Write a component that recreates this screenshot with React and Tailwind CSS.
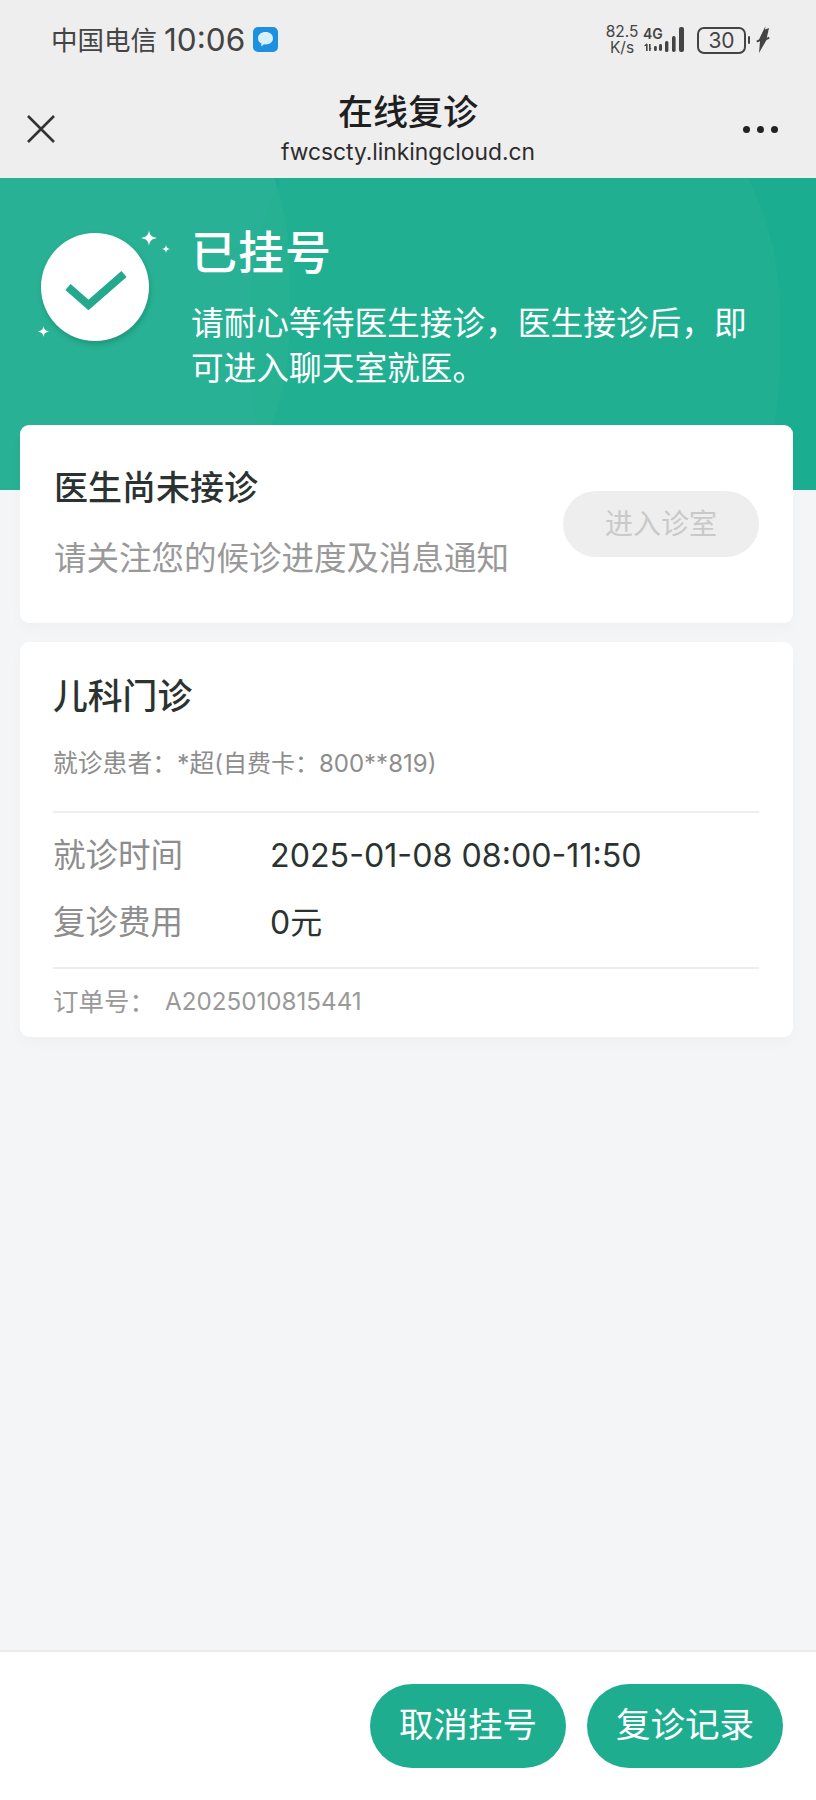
const cjk = { fontFamily: 'Inter, "Noto Sans CJK SC", sans-serif' };

function StatusIcons() {
  return (
    <div className="flex items-center text-[#444]">
      <div className="w-[36px] flex flex-col items-center text-[15.500px] leading-[16px]">
        <span>82.5</span>
        <span>K/s</span>
      </div>
      <div className="relative ml-[3px] w-[45px] h-[28px]">
        <span className="absolute left-0 top-0 text-[14px] font-semibold leading-[15px]">4G</span>
        <svg className="absolute left-0 top-0" width="45" height="28" viewBox="0 0 45 28" fill="#444">
          <path d="M3 18h1.600v7H3zM1 20l2.800-3v3zM6 18h1.600v7H6zM6 25v-3l2.600 0z" />
          <rect x="11" y="20" width="2.800" height="5" rx="1.300" />
          <rect x="16" y="18" width="3" height="7" rx="1.400" />
          <rect x="22" y="15" width="3.400" height="11" rx="1.600" />
          <rect x="29" y="10" width="3.600" height="16" rx="1.700" />
          <rect x="36" y="1" width="5" height="25" rx="2" />
        </svg>
      </div>
      <div className="flex items-center justify-center ml-[9px] w-[49px] h-[27px] rounded-[7px] border-[2px] border-[#444] text-[21px] leading-none">
        30
      </div>
      <div className="ml-[2px] w-[2px] h-[8px] bg-[#444] rounded-full" />
      <svg className="ml-[6px]" width="14" height="28" viewBox="0 0 14 28" fill="#444">
        <path d="M9.500 0 3 13.500l-2.500 1 .5 2 3-1.200L3 27l7.500-13 3-1.300-.5-1.900-2.200.9L13 2 9 3.500z" />
      </svg>
    </div>
  );
}

function TopBar() {
  return (
    <div className="bg-[#eeeeee] h-[178px] shrink-0">
      <div className="flex items-center justify-between h-[78px] pl-[51px] pr-[46px] pt-[2px]">
        <div className="flex items-center text-[#444]">
          <span className="text-[26.500px] leading-none">中国电信</span>
          <span className="ml-[7px] text-[31.500px] leading-none">10:06</span>
          <svg className="ml-[8px]" width="26" height="26" viewBox="0 0 26 26">
            <rect width="25" height="25" rx="5" fill="#1e90e0" />
            <path d="M12.500 5c4.500 0 7.500 2.600 7.500 6.200 0 3.600-3 6.200-7.500 6.200l-1.500-.1-2.700 2.200v-3C6 15.300 5 13.500 5 11.200 5 7.600 8 5 12.500 5z" fill="#d6f1fb" />
          </svg>
        </div>
        <StatusIcons />
      </div>
      <div className="grid grid-cols-[1fr_auto_1fr] items-center h-[100px]">
        <svg className="ml-[27px] mt-[2px]" width="28" height="28" viewBox="0 0 28 28" fill="none" stroke="#333" strokeWidth="2.600">
          <path d="M1 1l26 26M27 1 1 27" />
        </svg>
        <div className="flex flex-col items-center pt-[1px]">
          <div className="text-[35px] font-medium leading-[46px] text-[#1f1f1f]">在线复诊</div>
          <div className="text-[22.800px] leading-[33px] text-[#2c2c2c]">fwcscty.linkingcloud.cn</div>
        </div>
        <div className="flex items-center justify-end gap-[7px] mr-[38px] mt-[2px]">
          <span className="w-[7px] h-[7px] rounded-full bg-[#222]" />
          <span className="w-[7px] h-[7px] rounded-full bg-[#222]" />
          <span className="w-[7px] h-[7px] rounded-full bg-[#222]" />
        </div>
      </div>
    </div>
  );
}

function Sparkle({ size, className }) {
  return (
    <svg className={className} width={size} height={size} viewBox="0 0 20 20" fill="#fff">
      <path d="M10 0c.6 6 3.400 9 10 10-6.600 1-9.400 4-10 10-.6-6-3.400-9-10-10 6.600-1 9.400-4 10-10z" />
    </svg>
  );
}

function Banner() {
  return (
    <div className="relative h-[312px] shrink-0 overflow-hidden bg-[#1aad8f]">
      <div className="absolute left-[-300px] top-[-200px] w-[590px] h-[640px] rounded-full bg-[#2cb295] opacity-80" />
      <div className="absolute left-[250px] top-[-140px] w-[530px] h-[600px] rounded-[46%] bg-[#23b192] opacity-70" />
      <div className="relative flex pl-[41px] pt-[55px]">
        <div className="relative w-[108px] h-[108px] rounded-full bg-white shadow-[1px_3px_5px_rgba(20,110,90,0.4)] flex items-center justify-center shrink-0">
          <svg width="108" height="108" viewBox="0 0 108 108" fill="none">
            <path d="M27 54 47.500 72 83 41" stroke="#25a98c" strokeWidth="8" />
          </svg>
          <Sparkle size={16} className="absolute left-[100px] top-[-3px]" />
          <Sparkle size={8} className="absolute left-[121px] top-[12px]" />
          <Sparkle size={11} className="absolute left-[-3px] top-[93px]" />
        </div>
        <div className="ml-[42px] w-[565px] text-white -mt-[4px]">
          <div className="text-[46px] font-medium leading-[46px] tracking-[1px]">已挂号</div>
          <p className="mt-[26px] text-[32.700px] leading-[45px]">请耐心等待医生接诊，医生接诊后，即可进入聊天室就医。</p>
        </div>
      </div>
    </div>
  );
}

function StatusCard() {
  return (
    <div className="flex items-center justify-between h-[198px] rounded-[9px] bg-white pl-[34px] pr-[34px] shadow-[0_6px_14px_rgba(0,0,0,0.025)]">
      <div>
        <div className="text-[34px] font-medium leading-[44px] text-[#2b3331] -mt-[1px]">医生尚未接诊</div>
        <div className="mt-[27px] text-[32.500px] leading-[44px] text-[#999]">请关注您的候诊进度及消息通知</div>
      </div>
      <button className="w-[196px] h-[66px] rounded-full bg-[#eeeeee] text-[28px] text-[#c9c9c9]">进入诊室</button>
    </div>
  );
}

function InfoCard() {
  return (
    <div className="mt-[19px] h-[395px] rounded-[9px] bg-white pl-[33px] pr-[34px] shadow-[0_6px_14px_rgba(0,0,0,0.025)]">
      <div className="pt-[31px] text-[34.800px] font-medium leading-[46px] text-[#2b3331]">儿科门诊</div>
      <div className="mt-[27px] text-[24.800px] leading-[34px] text-[#8d8d8d]">
        就诊患者：*超<span className="text-[24px]">(自费卡：800**819)</span>
      </div>
      <div className="mt-[30px] border-t-[2px] border-[#eeeeee] pt-[23px]">
        <div className="flex items-center h-[40px] text-[32.500px]">
          <span className="w-[217px] text-[#8d8d8d]">就诊时间</span>
          <span className="text-[32.200px] text-[#2b3331]">2025-01-08 08:00-11:50</span>
        </div>
        <div className="flex items-center h-[40px] mt-[27px] text-[32.500px]">
          <span className="w-[217px] text-[#8d8d8d]">复诊费用</span>
          <span className="text-[32px] text-[#2b3331]">0元</span>
        </div>
      </div>
      <div className="flex items-center mt-[24px] border-t-[2px] border-[#eeeeee] pt-[16px] text-[25.500px] leading-[34px] text-[#999]">
        <span className="w-[112px]">订单号：</span>
        <span className="text-[24.200px]">A2025010815441</span>
      </div>
    </div>
  );
}

function BottomBar() {
  return (
    <div className="flex justify-end gap-[21px] h-[150px] shrink-0 border-t-[2px] border-[#ebebeb] bg-white pt-[32px] pr-[33px]">
      <button className="w-[196px] h-[84px] pb-[2px] rounded-full bg-[#1fad90] text-[34.500px] text-white">取消挂号</button>
      <button className="w-[196px] h-[84px] pb-[2px] rounded-full bg-[#1fad90] text-[34.500px] text-white">复诊记录</button>
    </div>
  );
}

export default function App() {
  return (
    <div className="flex flex-col h-[1800px] bg-[#f4f5f7] overflow-hidden" style={cjk}>
      <TopBar />
      <Banner />
      <div className="relative flex-1 pl-[20px] pr-[23px] -mt-[65px]">
        <StatusCard />
        <InfoCard />
      </div>
      <BottomBar />
    </div>
  );
}
